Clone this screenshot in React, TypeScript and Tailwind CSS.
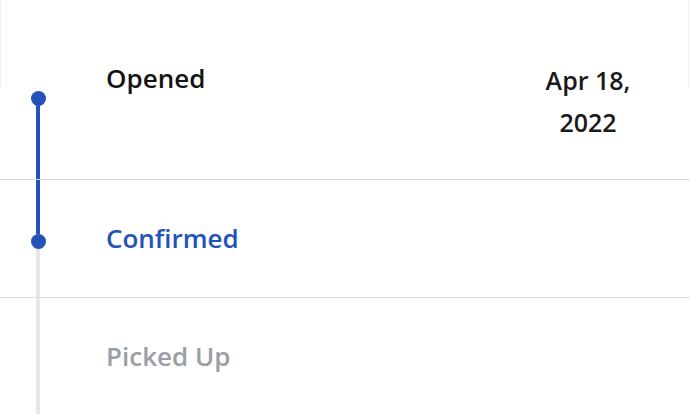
import React from "react";

const font = { fontFamily: "'Open Sans', Lato, sans-serif" };

export default function App() {
  return (
    <div className="relative w-[690px] h-[414px] bg-white overflow-hidden" style={font}>
      <div className="absolute left-0 top-0 h-[88px] w-[689px] border-l border-r border-[#f1f1f1] pointer-events-none" />
      {/* Row 1 */}
      <div className="flex h-[180px] border-b border-[#dcdcdc]">
        <div className="w-[76px] flex flex-col items-center">
          <div className="h-[91px]" />
          <div className="w-[15px] h-[15px] rounded-full bg-[#2353b8]" />
          <div className="flex-1 w-[4px] bg-[#2353b8] -mt-[4px]" />
        </div>
        <div className="flex-1 pl-[30px] pt-[57px]">
          <div className="text-[26px] leading-[42px] font-semibold text-[#141414]">Opened</div>
        </div>
        <div className="w-[120px] mr-[42px] pt-[59px] text-center text-[25px] leading-[42px] font-semibold text-[#1a1a1a]">
          <div>Apr 18,</div>
          <div>2022</div>
        </div>
      </div>
      {/* Row 2 */}
      <div className="flex h-[118px] border-b border-[#dcdcdc]">
        <div className="w-[76px] flex flex-col items-center">
          <div className="h-[54px] w-[4px] bg-[#2353b8]" />
          <div className="w-[15px] h-[15px] rounded-full bg-[#2353b8]" />
          <div className="flex-1 w-[4px] bg-[#e6e6e6]" />
        </div>
        <div className="flex-1 pl-[30px] flex items-center">
          <div className="text-[26px] leading-[42px] font-semibold text-[#2353b8] -mt-[2px]">Confirmed</div>
        </div>
      </div>
      {/* Row 3 */}
      <div className="flex h-[116px]">
        <div className="w-[76px] flex flex-col items-center">
          <div className="flex-1 w-[4px] bg-[#e6e6e6]" />
        </div>
        <div className="flex-1 pl-[30px] flex items-center">
          <div className="text-[26px] leading-[42px] font-semibold text-[#9a9ea6]">Picked Up</div>
        </div>
      </div>
    </div>
  );
}
